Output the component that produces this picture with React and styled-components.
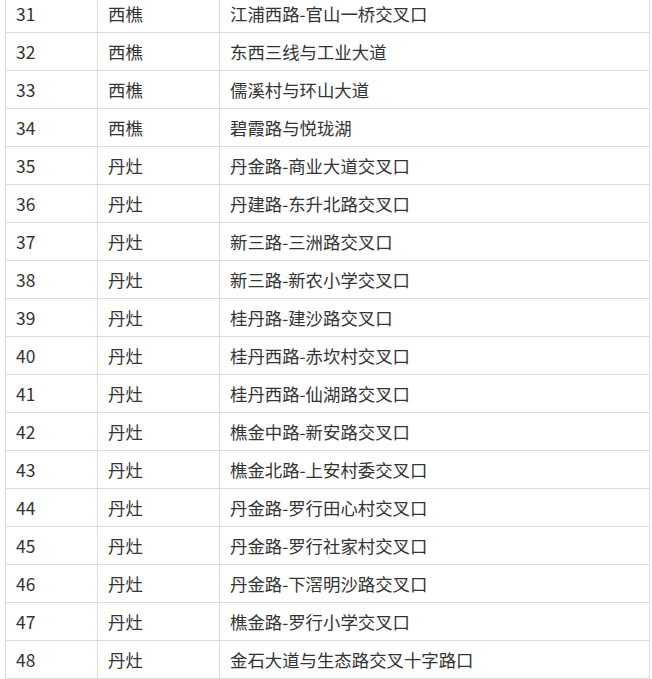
import React from "react";
import styled, { createGlobalStyle } from "styled-components";

const Global = createGlobalStyle`
  html, body { margin: 0; padding: 0; background: #fff; }
  body { padding: 0 0 0 5px; overflow: hidden; }
`;

const Table = styled.table`
  border-collapse: collapse;
  table-layout: fixed;
  width: 645px;
  margin-top: -6px;
  font-family: "Noto Sans CJK SC", "Microsoft YaHei", sans-serif;
  font-size: 17.4px;
  color: #333;
`;

const Cell = styled.td`
  border: 1px solid #dcdcdc;
  height: 38px;
  padding: 0 0 0 10px;
  box-sizing: border-box;
  line-height: 20px;
  vertical-align: middle;
  white-space: nowrap;
`;

const rows = [
  ["31", "西樵", "江浦西路-官山一桥交叉口"],
  ["32", "西樵", "东西三线与工业大道"],
  ["33", "西樵", "儒溪村与环山大道"],
  ["34", "西樵", "碧霞路与悦珑湖"],
  ["35", "丹灶", "丹金路-商业大道交叉口"],
  ["36", "丹灶", "丹建路-东升北路交叉口"],
  ["37", "丹灶", "新三路-三洲路交叉口"],
  ["38", "丹灶", "新三路-新农小学交叉口"],
  ["39", "丹灶", "桂丹路-建沙路交叉口"],
  ["40", "丹灶", "桂丹西路-赤坎村交叉口"],
  ["41", "丹灶", "桂丹西路-仙湖路交叉口"],
  ["42", "丹灶", "樵金中路-新安路交叉口"],
  ["43", "丹灶", "樵金北路-上安村委交叉口"],
  ["44", "丹灶", "丹金路-罗行田心村交叉口"],
  ["45", "丹灶", "丹金路-罗行社家村交叉口"],
  ["46", "丹灶", "丹金路-下滘明沙路交叉口"],
  ["47", "丹灶", "樵金路-罗行小学交叉口"],
  ["48", "丹灶", "金石大道与生态路交叉十字路口"],
];

export default function App() {
  return (
    <>
      <Global />
      <Table>
        <colgroup>
          <col style={{ width: 92 }} />
          <col style={{ width: 122 }} />
          <col />
        </colgroup>
        <tbody>
          {rows.map((r) => (
            <tr key={r[0]}>
              <Cell>{r[0]}</Cell>
              <Cell>{r[1]}</Cell>
              <Cell>{r[2]}</Cell>
            </tr>
          ))}
        </tbody>
      </Table>
    </>
  );
}
